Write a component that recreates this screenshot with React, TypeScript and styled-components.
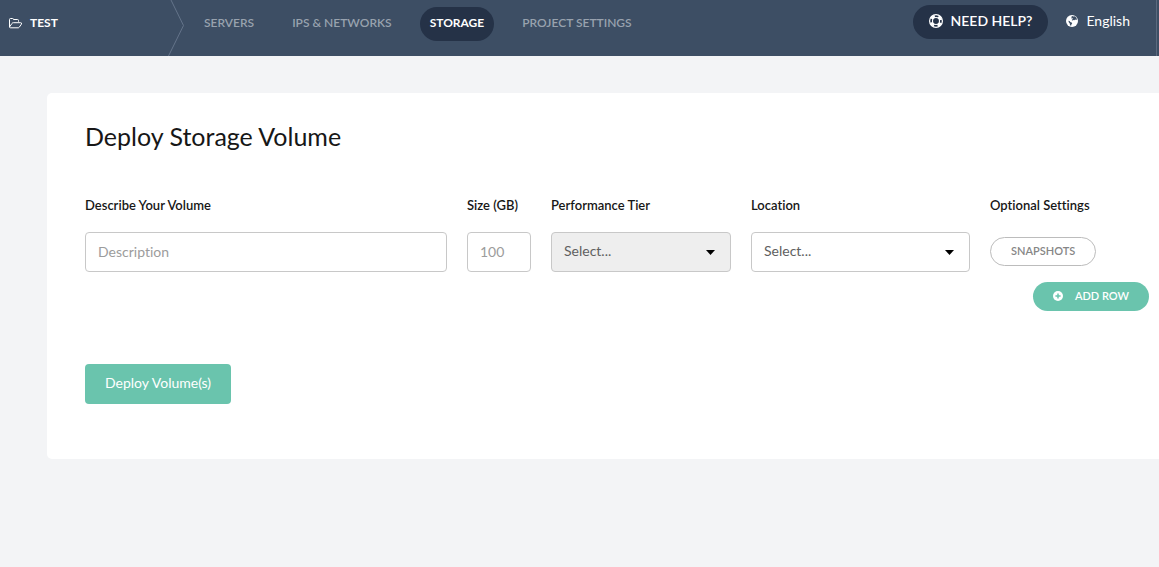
import React from "react";
import styled, { createGlobalStyle, css } from "styled-components";

const GlobalStyle = createGlobalStyle`
  *, *::before, *::after { box-sizing: border-box; }
  body {
    margin: 0;
    background: #f3f4f6;
    color: #171717;
    font-family: Lato, "Liberation Sans", sans-serif;
    font-size: 14px;
    font-variant-ligatures: none;
    line-height: 20px;
  }
  button, input, select { font: inherit; font-variant-ligatures: none; }
`;

const TopBar = styled.header`
  display: flex;
  align-items: stretch;
  height: 56px;
  padding-right: 2px;
  background: #3d4e64;
`;

const Project = styled.a`
  display: flex;
  align-items: center;
  gap: 8px;
  width: 168px;
  padding: 0 0 10px 9px;
  color: #fff;
  font-size: 12px;
  font-weight: 700;
  text-decoration: none;
`;

const Chevron = styled.svg`
  flex: none;
  width: 16px;
  height: 56px;
`;

const Nav = styled.nav`
  display: flex;
  align-items: flex-start;
  gap: 18px;
  padding: 7px 0 0 10px;
`;

const NavLink = styled.a<{ $active?: boolean }>`
  padding: 6px 10px 8px;
  border-radius: 17px;
  color: #98a2ae;
  font-size: 12px;
  font-weight: 600;
  white-space: nowrap;
  text-decoration: none;
  ${({ $active }) =>
    $active &&
    css`
      background: #253247;
      color: #fff;
      font-weight: 700;
    `}
`;

const Tools = styled.div`
  display: flex;
  align-items: flex-start;
  gap: 18px;
  margin-left: auto;
  padding: 5px 26px 0 0;
  border-right: 1px solid #5b6a7e;
`;

const HelpButton = styled.button`
  display: flex;
  align-items: center;
  gap: 8px;
  height: 34px;
  padding: 0 16px 2px;
  border: 0;
  border-radius: 17px;
  background: #253247;
  color: #fff;
  font-weight: 600;
`;

const LanguageButton = styled.button`
  display: flex;
  align-items: center;
  gap: 8px;
  height: 34px;
  padding: 0 0 2px;
  border: 0;
  background: none;
  color: #fff;
`;

const Card = styled.main`
  margin: 37px 0 0 47px;
  padding: 28px 10px 55px 38px;
  border-radius: 5px 0 0 5px;
  background: #fff;
`;

const Title = styled.h1`
  margin: 0;
  font-size: 25px;
  font-weight: 400;
  line-height: 30px;
`;

const Row = styled.div`
  display: grid;
  grid-template-columns: minmax(0, 1fr) 64px 180px 219px 159px;
  gap: 20px;
  margin-top: 44px;
`;

const Field = styled.div`
  display: flex;
  flex-direction: column;
  gap: 17px;
`;

const Label = styled.label`
  font-size: 13px;
  font-weight: 600;
  white-space: nowrap;
`;

const control = css`
  width: 100%;
  height: 40px;
  padding: 0 12px 2px;
  border: 1px solid #c8c8c8;
  border-radius: 4px;
  background: #fff;
`;

const TextInput = styled.input`
  ${control}
  color: #171717;
  &::placeholder { color: #9c9c9c; opacity: 1; }
`;

const SelectBox = styled.div`
  display: grid;
  align-items: center;
`;

const Select = styled.select`
  ${control}
  grid-area: 1 / 1;
  appearance: none;
  color: #606060;
  opacity: 1;
  &:disabled { background: #eee; }
`;

const Caret = styled.svg`
  grid-area: 1 / 1;
  justify-self: end;
  margin-right: 16px;
  pointer-events: none;
`;

const SnapshotsButton = styled.button`
  align-self: flex-start;
  height: 29px;
  margin-top: 5px;
  padding: 0 20px 2px;
  border: 1px solid #bcbcbc;
  border-radius: 15px;
  background: #fff;
  color: #868686;
  font-size: 11px;
  font-weight: 600;
`;

const AddRowButton = styled.button`
  display: flex;
  align-items: center;
  gap: 12px;
  height: 29px;
  margin: 10px 0 0 auto;
  padding: 0 20px 1px;
  border: 0;
  border-radius: 15px;
  background: #6ac4ad;
  color: #fff;
  font-size: 11px;
  font-weight: 600;
`;

const DeployButton = styled.button`
  height: 40px;
  margin-top: 53px;
  padding: 0 20px 2px;
  border: 0;
  border-radius: 4px;
  background: #6ac4ad;
  color: #fff;
`;

const FolderIcon = () => (
  <svg width="13" height="11" viewBox="0 0 13 11" fill="none" stroke="currentColor" strokeLinejoin="round" aria-hidden="true">
    <path d="M.5 9V1.5q0-1 1-1h2q1 0 1 1h4q1 0 1 1v1.2M.5 9q0 .8 1 .8h7.6q.7 0 1.1-.5l2.2-3.1q.7-1.5-.8-1.5H4.3q-.8 0-1.3.7L.5 9" />
  </svg>
);

const RingIcon = () => (
  <svg width="14" height="14" viewBox="0 0 14 14" fill="none" stroke="currentColor" aria-hidden="true">
    <circle cx="7" cy="7" r="6.4" strokeWidth="1.2" />
    <circle cx="7" cy="7" r="3.5" strokeWidth="1.1" />
    <circle cx="7" cy="7" r="4.9" strokeWidth="2.8" strokeDasharray="4 3.7" strokeDashoffset="-1.85" />
  </svg>
);

const GlobeIcon = () => (
  <svg width="12" height="12" viewBox="0 0 12 12" aria-hidden="true">
    <circle cx="6" cy="6" r="6" fill="currentColor" />
    <path
      fill="#3d4e64"
      d="M6.2 1.1l1.2.5 1.3-.3 1.5 1.3.8 1.6-.8.7-1-.4-.8.7-.9-.2-.8.6-.9-.3.2-.8 1-.6-.4-.7-.9.4-.6-.6.6-.6-.3-.6zM2.4 5.8l1.2.3.7.9 1.4.5.5.9-.7.9-.5 1.6-1.1-1.1-.1-1.3-1-1.2z"
    />
  </svg>
);

const PlusIcon = () => (
  <svg width="10" height="10" viewBox="0 0 10 10" aria-hidden="true">
    <circle cx="5" cy="5" r="5" fill="currentColor" />
    <path d="M5 2.4v5.2M2.4 5h5.2" stroke="#6ac4ad" strokeWidth="1.5" />
  </svg>
);

const CaretIcon = () => (
  <Caret width="9" height="5" viewBox="0 0 9 5" aria-hidden="true">
    <path d="M0 0h9L4.5 5z" fill="#000" />
  </Caret>
);

const links = ["SERVERS", "IPS & NETWORKS", "STORAGE", "PROJECT SETTINGS"];

export default function App() {
  return (
    <>
      <GlobalStyle />
      <TopBar>
        <Project href="#"><FolderIcon />TEST</Project>
        <Chevron viewBox="0 0 16 56" fill="none" stroke="#64748a" aria-hidden="true">
          <path d="M2.5-1 15.5 25.5.5 56" />
        </Chevron>
        <Nav>
          {links.map((name) => (
            <NavLink key={name} href="#" $active={name === "STORAGE"}>{name}</NavLink>
          ))}
        </Nav>
        <Tools>
          <HelpButton type="button"><RingIcon />NEED HELP?</HelpButton>
          <LanguageButton type="button"><GlobeIcon />English</LanguageButton>
        </Tools>
      </TopBar>
      <Card>
        <Title>Deploy Storage Volume</Title>
        <Row>
          <Field>
            <Label htmlFor="description">Describe Your Volume</Label>
            <TextInput id="description" placeholder="Description" />
          </Field>
          <Field>
            <Label htmlFor="size">Size (GB)</Label>
            <TextInput id="size" inputMode="numeric" placeholder="100" />
          </Field>
          <Field>
            <Label htmlFor="tier">Performance Tier</Label>
            <SelectBox>
              <Select id="tier" disabled><option>Select...</option></Select>
              <CaretIcon />
            </SelectBox>
          </Field>
          <Field>
            <Label htmlFor="location">Location</Label>
            <SelectBox>
              <Select id="location"><option>Select...</option></Select>
              <CaretIcon />
            </SelectBox>
          </Field>
          <Field>
            <Label htmlFor="snapshots">Optional Settings</Label>
            <SnapshotsButton id="snapshots" type="button">SNAPSHOTS</SnapshotsButton>
          </Field>
        </Row>
        <AddRowButton type="button"><PlusIcon />ADD ROW</AddRowButton>
        <DeployButton type="button">Deploy Volume(s)</DeployButton>
      </Card>
    </>
  );
}
